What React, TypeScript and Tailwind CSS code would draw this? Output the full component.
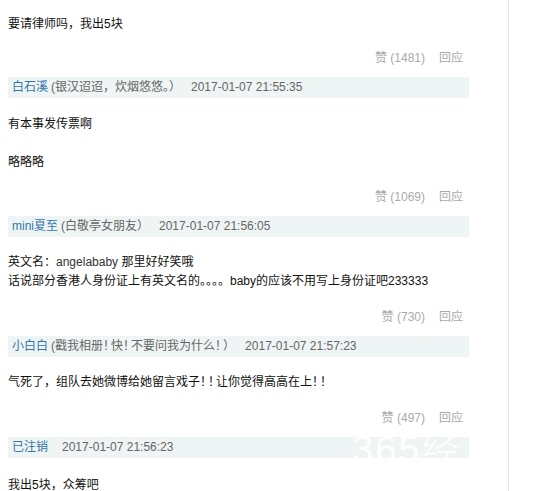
const font = { fontFamily: '"Liberation Sans", Arial, "Noto Sans CJK SC", sans-serif' };

interface HeaderProps {
    name: string;
    sign?: React.ReactNode;
    date: string;
    watermark?: boolean;
}

// full-width bangs in the reference render narrower than a whole em
const Bang = () => <span className="tracking-[-4px]">！</span>;

const Header = ({ name, sign, date, watermark }: HeaderProps) => {
    return (
        <div className="relative flex h-[21px] items-center overflow-hidden bg-[#eff5f4] pl-1 text-[12px] leading-[21px] text-[#666]">
            <span className="text-[#3377aa]">{name}</span>
            {sign ? <span className="ml-[3px]">{sign}</span> : null}
            <span className={sign ? "ml-[10px]" : "ml-[14px]"}>{date}</span>
            {watermark ? (
                <span className="pointer-events-none absolute left-[344px] top-[-6px] text-[38px] font-light leading-[38px] tracking-[2px] text-white">
                    365经典
                </span>
            ) : null}
        </div>
    );
};

const Actions = ({ likes, className }: { likes: number; className: string }) => {
    return (
        <div className={"flex h-5 items-center justify-end pr-[6px] text-[12px] leading-5 text-[#aaa] " + className}>
            <span>赞 ({likes})</span>
            <span className="ml-[14px]">回应</span>
        </div>
    );
};

export default function App() {
    return (
        <div className="flex h-[491px] w-[544px] overflow-hidden bg-white" style={font}>
            <div className="ml-2 w-[461px] pt-[14px] text-[12px] text-[#111]">
                <p className="leading-5">要请律师吗，我出5块</p>
                <Actions likes={1481} className="mt-[14px]" />

                <div className="mt-[9px]">
                    <Header name="白石溪" sign="(银汉迢迢，炊烟悠悠。）" date="2017-01-07 21:55:35" />
                </div>
                <p className="mt-4 leading-5">有本事发传票啊</p>
                <p className="mt-[18px] leading-5">略略略</p>
                <Actions likes={1069} className="mt-[15px]" />

                <div className="mt-[9px]">
                    <Header name="mini夏至" sign="(白敬亭女朋友）" date="2017-01-07 21:56:05" />
                </div>
                <div className="mt-4 leading-[19px]">
                    <p>
                        英文名：<span className="text-[#333]">angelababy</span> 那里好好笑哦
                    </p>
                    <p>话说部分香港人身份证上有英文名的。。。。baby的应该不用写上身份证吧233333</p>
                </div>
                <Actions likes={730} className="mt-4" />

                <div className="mt-[9px]">
                    <Header
                        name="小白白"
                        sign={
                            <>
                                (戳我相册<Bang />快<Bang />不要问我为什么<Bang />）
                            </>
                        }
                        date="2017-01-07 21:57:23"
                    />
                </div>
                <p className="mt-[15px] leading-5">
                    气死了，组队去她微博给她留言戏子<Bang />
                    <Bang />让你觉得高高在上<Bang />
                    <Bang />
                </p>
                <Actions likes={497} className="mt-4" />

                <div className="mt-[9px]">
                    <Header name="已注销" date="2017-01-07 21:56:23" watermark />
                </div>
                <p className="mt-[17px] leading-5">我出5块，众筹吧</p>
            </div>
            <div className="ml-[39px] w-px self-stretch bg-[#e3e3e3]" />
        </div>
    );
}
